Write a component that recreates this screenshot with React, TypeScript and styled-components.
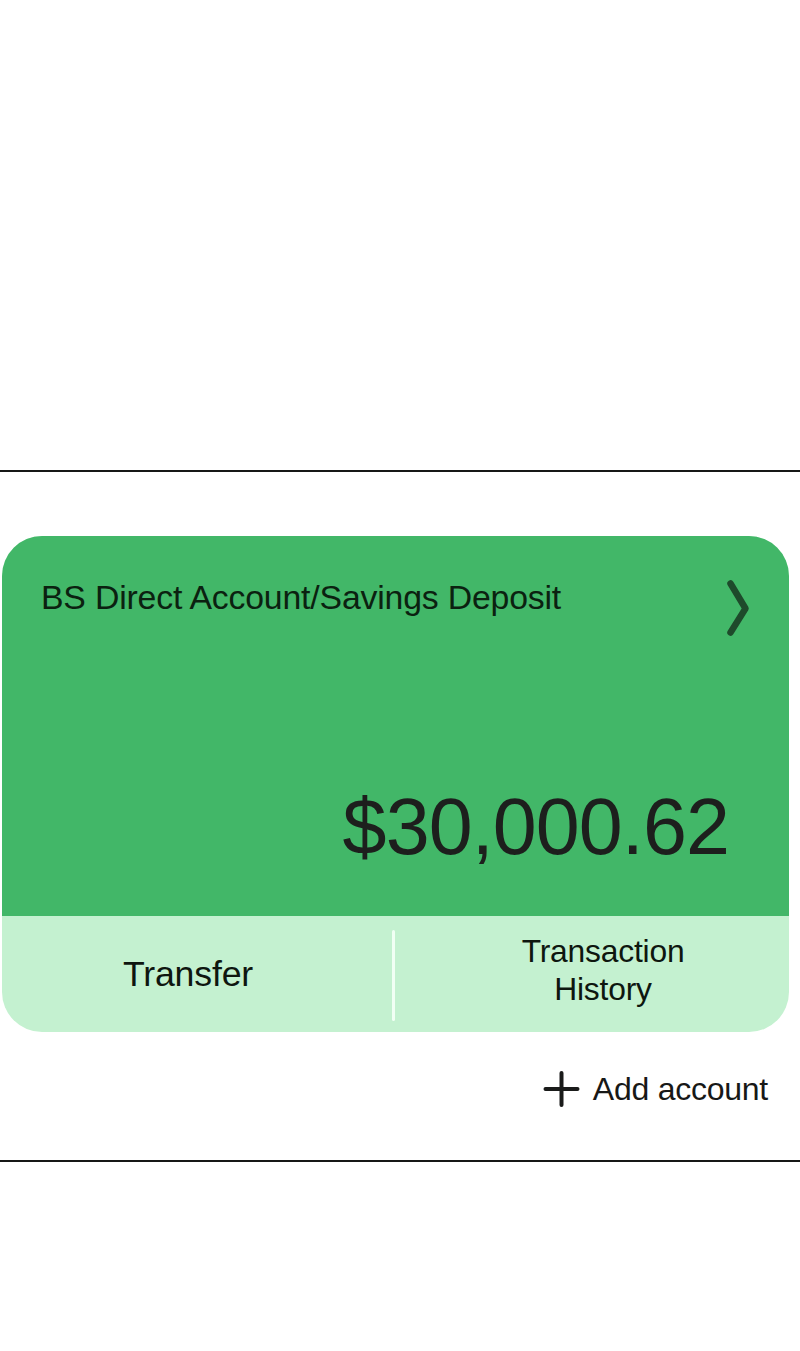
import React from "react";
import styled, { createGlobalStyle } from "styled-components";

const GlobalStyle = createGlobalStyle`
  * {
    box-sizing: border-box;
  }

  body {
    margin: 0;
    background: #ffffff;
    color: #1a1b1a;
    font-family: "Liberation Sans", Arial, sans-serif;
  }
`;

const Screen = styled.main`
  width: 800px;
  height: 1351px;
  padding-top: 470px;
  overflow: hidden;
`;

const Section = styled.section`
  height: 692px;
  padding: 64px 11px 0 2px;
  border-top: 2px solid #171817;
  border-bottom: 2px solid #171817;
`;

const Card = styled.article`
  height: 496px;
  border-radius: 40px;
  overflow: hidden;
  background: #c4f1d0;
`;

const CardBody = styled.div`
  display: flex;
  flex-direction: column;
  justify-content: space-between;
  height: 380px;
  padding: 41px 39px 44px 39px;
  background: #42b768;
`;

const CardHeader = styled.header`
  display: flex;
  align-items: flex-start;
  justify-content: space-between;
`;

const Title = styled.h1`
  margin: 0;
  color: #0b2110;
  font-size: 33.8px;
  font-weight: 400;
  letter-spacing: -0.18px;
  line-height: 40px;
  white-space: nowrap;
`;

const Chevron = styled.svg`
  width: 24px;
  height: 58px;
  margin-top: 2px;
`;

const Amount = styled.p`
  margin: 0 21px 0 0;
  color: #1d1f1d;
  font-size: 79px;
  letter-spacing: -0.9px;
  line-height: 90px;
  text-align: right;
`;

const Actions = styled.div`
  display: flex;
  align-items: center;
  height: 116px;
`;

const Action = styled.button<{ $size: number; $inset: string }>`
  flex: 1;
  height: 100%;
  padding: ${({ $inset }) => $inset};
  border: none;
  background: none;
  color: #0e160f;
  font-family: inherit;
  font-size: ${({ $size }) => $size}px;
  letter-spacing: -0.2px;
  line-height: 38px;
`;

const Divider = styled.span`
  width: 3px;
  height: 91px;
  margin: 3px 6px 0 0;
  border-radius: 2px;
  background: #f1fff4;
`;

const AddAccount = styled.button`
  display: flex;
  align-items: center;
  gap: 13px;
  height: 40px;
  margin: 37px 21px 0 auto;
  padding: 0;
  border: none;
  background: none;
  color: #171817;
  font-family: inherit;
  font-size: 32px;
  letter-spacing: -0.25px;
  line-height: 40px;
`;

const Plus = styled.svg`
  width: 37px;
  height: 36px;
`;

const App: React.FC = () => (
  <>
    <GlobalStyle />
    <Screen>
      <Section>
        <Card>
          <CardBody>
            <CardHeader>
              <Title>BS Direct Account/Savings Deposit</Title>
              <Chevron viewBox="0 0 24 58" fill="none">
                <path
                  d="M4.5 4.5 19.5 29.5 4.5 53.5"
                  stroke="#1e4a2b"
                  strokeWidth="6.5"
                  strokeLinecap="round"
                  strokeLinejoin="round"
                />
              </Chevron>
            </CardHeader>
            <Amount>$30,000.62</Amount>
          </CardBody>
          <Actions>
            <Action $size={35.7} $inset="0 18px 1px 0">
              Transfer
            </Action>
            <Divider />
            <Action $size={31.8} $inset="0 0 8px 16px">
              Transaction
              <br />
              History
            </Action>
          </Actions>
        </Card>
        <AddAccount>
          <Plus viewBox="0 0 37 36" fill="none">
            <path
              d="M2.5 18h32M18.5 2v32"
              stroke="#1a1b1a"
              strokeWidth="4"
              strokeLinecap="round"
            />
          </Plus>
          Add account
        </AddAccount>
      </Section>
    </Screen>
  </>
);

export default App;
